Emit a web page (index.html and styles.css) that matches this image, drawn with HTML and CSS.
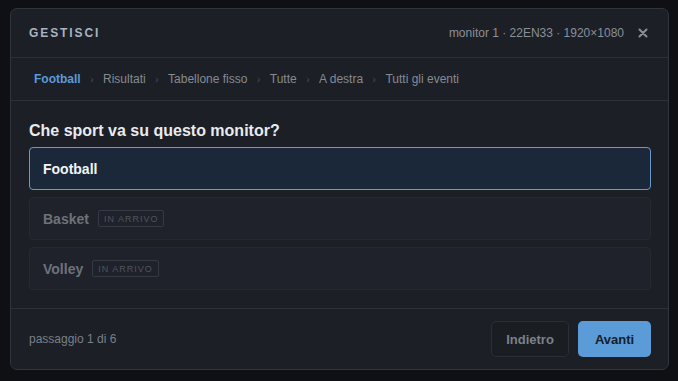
FILE: index.html
```html
<!DOCTYPE html>
<html lang="it">
<head>
  <meta charset="UTF-8" />
  <title>Gestisci</title>
  <link rel="stylesheet" href="styles.css">
</head>
<body>

  <div class="dialog">
    <header class="dlg-head">
      <div class="dlg-title">GESTISCI</div>
      <div class="dlg-meta">
        <span>monitor 1 · 22EN33 · 1920×1080</span>
        <button class="close" aria-label="Chiudi">
          <svg width="10" height="10" viewBox="0 0 10 10"><path d="M1.5 1.5 L8.5 8.5 M8.5 1.5 L1.5 8.5" stroke="#8a9099" stroke-width="2" stroke-linecap="round"/></svg>
        </button>
      </div>
    </header>

    <nav class="steps">
      <span class="step active">Football</span><span class="sep">›</span>
      <span class="step">Risultati</span><span class="sep">›</span>
      <span class="step">Tabellone fisso</span><span class="sep">›</span>
      <span class="step">Tutte</span><span class="sep">›</span>
      <span class="step">A destra</span><span class="sep">›</span>
      <span class="step">Tutti gli eventi</span>
    </nav>

    <main class="dlg-body">
      <h2>Che sport va su questo monitor?</h2>
      <div class="options">
        <div class="option selected">Football</div>
        <div class="option disabled">Basket <span class="badge">IN ARRIVO</span></div>
        <div class="option disabled">Volley <span class="badge">IN ARRIVO</span></div>
      </div>
    </main>

    <footer class="dlg-foot">
      <span class="progress">passaggio 1 di 6</span>
      <div class="actions">
        <button class="btn btn-back">Indietro</button>
        <button class="btn btn-next">Avanti</button>
      </div>
    </footer>
  </div>

</body>
</html>
```

FILE: styles.css
```css
* { box-sizing: border-box; margin: 0; padding: 0; }
html, body {
  width: 100%; height: 100%;
  background: #0e1014;
  font-family: 'Liberation Sans', Arial, sans-serif;
  color: #e8ebef;
  overflow: hidden;
}
body { padding: 8px 9px 0 10px; }

.dialog {
  width: 659px;
  height: 362px;
  background: #1c1f25;
  border: 1px solid #30343c;
  border-radius: 7px;
  display: flex;
  flex-direction: column;
}

.dlg-head {
  height: 49px;
  display: flex;
  align-items: center;
  justify-content: space-between;
  padding: 0 20px 0 18px;
  border-bottom: 1px solid #2c3038;
}
.dlg-title {
  font-size: 12px;
  font-weight: bold;
  letter-spacing: 1.9px;
  color: #a8b3c1;
}
.dlg-meta {
  display: flex;
  align-items: center;
  gap: 14px;
  font-size: 12px;
  color: #8a9099;
}
.close {
  background: none;
  border: none;
  display: flex;
  cursor: pointer;
}

.steps {
  height: 43px;
  display: flex;
  align-items: center;
  padding: 0 23px;
  font-size: 12px;
  color: #858b94;
  border-bottom: 1px solid #2c3038;
}
.step.active { color: #5b9ad6; font-weight: bold; }
.sep {
  color: #4a4f57;
  font-size: 10px;
  margin: 0 9.5px;
}

.dlg-body {
  flex: 1;
  padding: 20px 17px 0 18px;
}
h2 {
  font-size: 16px;
  line-height: 20px;
  font-weight: bold;
  color: #e8ebef;
  margin-bottom: 6px;
}
.options {
  display: flex;
  flex-direction: column;
  gap: 7px;
}
.option {
  height: 43px;
  display: flex;
  align-items: center;
  gap: 9px;
  padding: 0 13px;
  border-radius: 4px;
  font-size: 14px;
  font-weight: bold;
}
.option.selected {
  background: #1b283a;
  border: 1px solid #6a9acb;
  color: #f2f4f7;
}
.option.disabled {
  background: #1f222a;
  border: 1px solid #252930;
  color: #6d727b;
}
.badge {
  font-size: 9px;
  font-weight: normal;
  letter-spacing: 1px;
  color: #4f555e;
  border: 1px solid #353a42;
  border-radius: 2px;
  padding: 3px 5px 2px;
}

.dlg-foot {
  height: 61px;
  display: flex;
  align-items: center;
  justify-content: space-between;
  padding: 0 17px 0 18px;
  border-top: 1px solid #2c3038;
}
.progress {
  font-size: 12px;
  color: #7a8089;
}
.actions {
  display: flex;
  gap: 9px;
}
.btn {
  height: 36px;
  border-radius: 5px;
  font-family: 'Liberation Sans', Arial, sans-serif;
  font-size: 13px;
  font-weight: bold;
  cursor: pointer;
}
.btn-back {
  width: 78px;
  background: #1a1d22;
  border: 1px solid #2a2e36;
  color: #7b818a;
}
.btn-next {
  width: 73px;
  background: #5b9bd8;
  border: none;
  color: #14202e;
}
```
